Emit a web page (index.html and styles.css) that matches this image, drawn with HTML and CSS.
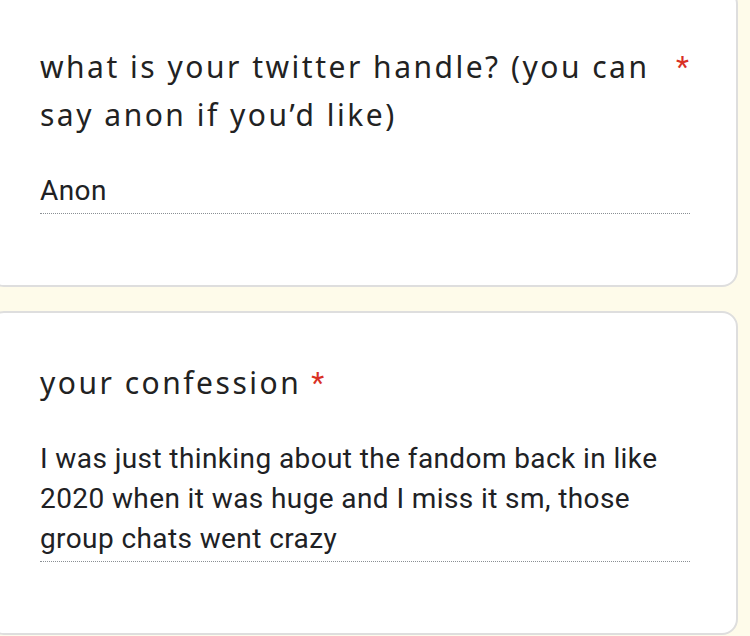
FILE: index.html
```html
<!DOCTYPE html>
<html lang="en">
<head>
  <meta charset="UTF-8" />
  <meta name="viewport" content="width=device-width, initial-scale=1.0"/>
  <title>Confessions</title>
  <link rel="stylesheet" href="styles.css">
</head>
<body>

  <div class="page">
    <div class="card first">
      <div class="q-title">
        <span class="q-text">what is your twitter handle? (you can say anon if you’d like)</span>
        <span class="req">*</span>
      </div>
      <div class="answer">Anon</div>
    </div>

    <div class="card">
      <div class="q-title">
        <span class="q-text">your confession</span>
        <span class="req">*</span>
      </div>
      <div class="answer">I was just thinking about the fandom back in like 2020 when it was huge and I miss it sm, those group chats went crazy</div>
    </div>
  </div>

</body>
</html>
```

FILE: styles.css
```css
body {
  margin: 0;
  background-color: #fefbea;
  font-family: Roboto, Arial, sans-serif;
  color: #202124;
  overflow: hidden;
}

.page {
  display: flex;
  flex-direction: column;
  gap: 24px;
  margin: -12px 0 0 -12px;
  width: 750px;
}

.card {
  background: white;
  border: 2px solid #dedede;
  border-radius: 16px;
  padding: 46px 46px 71px 50px;
}

.card.first {
  padding-top: 53px;
}

.q-title {
  display: flex;
  align-items: flex-start;
  gap: 10px;
  font-family: "Noto Sans", sans-serif;
  font-size: 30px;
  line-height: 48px;
  letter-spacing: 2.5px;
  color: #222;
}

.first .q-text {
  width: 626px;
}

.req {
  color: #d93025;
  font-family: Roboto, sans-serif;
  letter-spacing: 0;
}

.answer {
  margin-top: 32px;
  font-size: 28px;
  line-height: 40px;
  letter-spacing: 0.4px;
  padding-bottom: 2px;
  border-bottom: 1px dotted #8a8f94;
}
```
